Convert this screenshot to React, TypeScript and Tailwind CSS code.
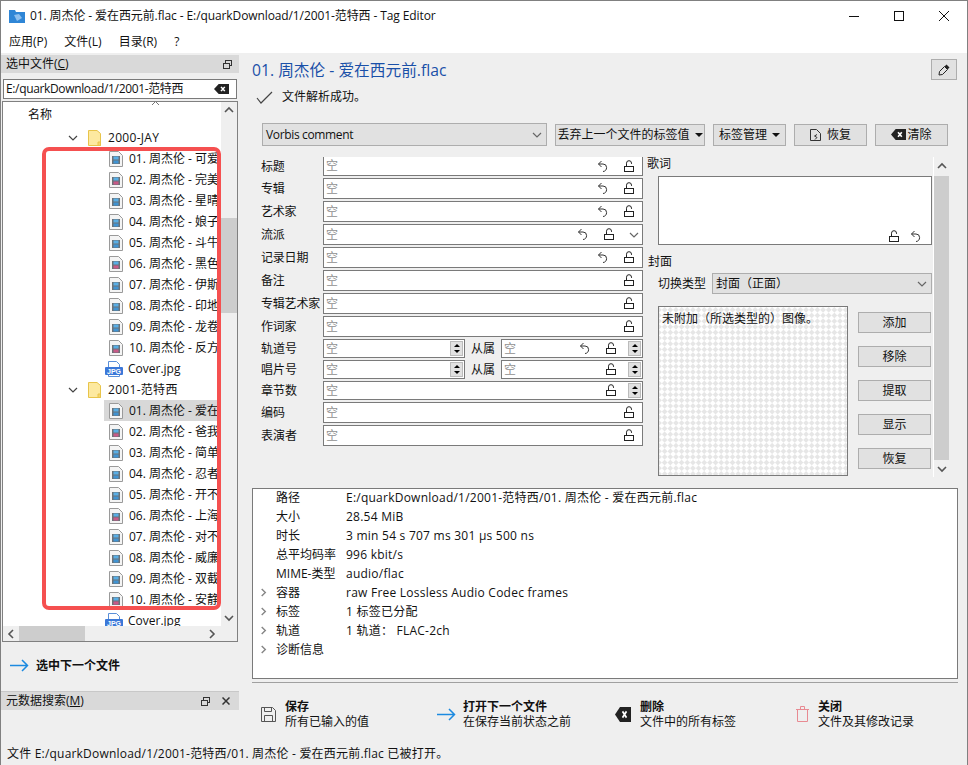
import type { ReactNode } from 'react';

const tagFields = [
  { label: '标题', icons: 'undo', top: true },
  { label: '专辑', icons: 'undo' },
  { label: '艺术家', icons: 'undo' },
  { label: '流派', icons: 'combo' },
  { label: '记录日期', icons: 'undo' },
  { label: '备注', icons: 'lock' },
  { label: '专辑艺术家', icons: 'lock' },
  { label: '作词家', icons: 'lock' },
];

const album2000 = ['可爱女人', '完美主义', '星晴', '娘子', '斗牛', '黑色幽默', '伊斯坦堡', '印地安老斑鸠', '龙卷风', '反方向的钟'];
const album2001 = ['爱在西元前', '爸我回来了', '简单爱', '忍者', '开不了口', '上海一九四三', '对不起', '威廉古堡', '双截棍', '安静'];

const details = [
  { label: '路径', value: 'E:/quarkDownload/1/2001-范特西/01. 周杰伦 - 爱在西元前.flac' },
  { label: '大小', value: '28.54 MiB' },
  { label: '时长', value: '3 min 54 s 707 ms 301 µs 500 ns' },
  { label: '总平均码率', value: '996 kbit/s' },
  { label: 'MIME-类型', value: 'audio/flac' },
  { label: '容器', value: 'raw Free Lossless Audio Codec frames', more: true },
  { label: '标签', value: '1 标签已分配', more: true },
  { label: '轨道', value: '1 轨道： FLAC-2ch', more: true },
  { label: '诊断信息', value: '', more: true },
];

const LockIcon = () => (
  <svg width="12" height="13" viewBox="0 0 12 13" fill="none" stroke="#222" strokeWidth="1" className="shrink-0">
    <path d="M3.5 6.5V3.2a2.5 2.5 0 0 1 5 0V4" />
    <rect x="1.5" y="6.5" width="9" height="5" />
  </svg>
);

const UndoIcon = () => (
  <svg width="12" height="13" viewBox="0 0 12 13" fill="none" stroke="#333" strokeWidth="1" className="shrink-0">
    <path d="M4.5 1 1.5 4l3 3" />
    <path d="M1.5 4H6a3.6 3.6 0 0 1 3.6 3.6c0 2.200-1.600 3.900-3.600 3.900" />
  </svg>
);

const Chevron = ({ color = '#666', size = 10, weight = 1.2 }: { color?: string; size?: number; weight?: number }) => (
  <svg width={size} height={size} viewBox="0 0 10 10" fill="none" stroke={color} strokeWidth={weight}>
    <path d="M1 3l4 4 4-4" />
  </svg>
);

const BackspaceIcon = ({ w = 16, h = 12 }: { w?: number; h?: number }) => (
  <svg width={w} height={h} viewBox="0 0 16 12" preserveAspectRatio="none">
    <path d="M5 0h11v12H5L0 6z" fill="#222" />
    <path d="M7.500 3.500l4 5m0-5l-4 5" stroke="#fff" strokeWidth="1.700" />
  </svg>
);

const FileIcon = ({ red }: { red?: boolean }) => (
  <svg width="14" height="16" viewBox="0 0 14 16" className="shrink-0">
    <path d="M.5.5h9l4 4v11H.5z" fill="#f4f4f4" stroke="#9a9a9a" />
    <rect x="3" y="5" width="8" height="8" fill="#6a7278" />
    <rect x="4.500" y="5.500" width="5" height="3" fill="#58aee6" />
    <rect x="4.500" y="9.500" width="5" height="3" fill={red ? '#c85a88' : '#3f93d3'} />
  </svg>
);

const JpgIcon = () => (
  <svg width="18" height="16" viewBox="0 0 18 16" className="shrink-0">
    <path d="M3.500.5h8l3 3v12h-11z" fill="#fff" stroke="#5a8fd8" />
    <rect x="0" y="6" width="18" height="8" rx="1" fill="#3b78d8" />
    <text x="9" y="12.500" textAnchor="middle" fontSize="7" fontWeight="700" fill="#fff" fontFamily="Liberation Sans">JPG</text>
  </svg>
);

const FolderIcon = () => (
  <svg width="13" height="16" viewBox="0 0 13 16" className="shrink-0">
    <path d="M.5.5h8.500l3.500 3v12H.5z" fill="#fde9a0" stroke="#e8c44a" />
    <path d="M10 12h2.500v3.500H10z" fill="#f6d66e" stroke="#e8c44a" />
  </svg>
);

const ArrowIcon = () => (
  <svg width="19" height="13" viewBox="0 0 19 13" fill="none" stroke="#1c8ae0" strokeWidth="1.500">
    <path d="M0 6.500h17.500M12 1l5.500 5.500L12 12" />
  </svg>
);

const DockFloat = () => (
  <svg width="9" height="9" viewBox="0 0 9 9" fill="none" stroke="#333">
    <rect x="2.500" y=".5" width="6" height="5" />
    <rect x=".5" y="3.500" width="6" height="5" fill="#d9d9d9" />
  </svg>
);

const DockClose = () => (
  <svg width="8" height="8" viewBox="0 0 8 8" stroke="#333" strokeWidth="1.500">
    <path d="M.5.5l7 7m0-7l-7 7" />
  </svg>
);

const Spinner = () => (
  <div className="flex w-[13px] h-[15px] flex-col items-center justify-around bg-[#e1e1e1] border border-[#bbb] shrink-0">
    <span className="w-0 h-0 border-x-[3px] border-x-transparent border-b-[3px] border-b-black" />
    <span className="w-0 h-0 border-x-[3px] border-x-transparent border-t-[3px] border-t-black" />
  </div>
);

const Caret = () => <span className="w-0 h-0 ml-[1px] border-x-[4px] border-x-transparent border-t-[4px] border-t-[#111] shrink-0" />;

const Empty = () => <span className="text-[#909090]">空</span>;

const ToolBtn = ({ w, children }: { w: string; children: ReactNode }) => (
  <div className={`${w} h-[22px] flex items-center justify-center gap-1 bg-[#e1e1e1] border border-[#adadad] shrink-0`}>{children}</div>
);

const FieldBox = ({ h = 'h-[21px]', children }: { h?: string; children?: ReactNode }) => (
  <div className={`${h} flex flex-1 items-center bg-white border border-[#7a7a7a] pl-[2px] pr-[7px]`}>
    <Empty />
    <div className="flex-1" />
    {children}
  </div>
);

const CoverBtn = ({ label }: { label: string }) => (
  <div className="h-[21px] flex items-center justify-center bg-[#e1e1e1] border border-[#adadad]">{label}</div>
);

const TreeRow = ({ name, selected, red }: { name: string; selected?: boolean; red?: boolean }) => (
  <div className={`h-[21px] ml-[101px] pl-[5px] flex items-center gap-[6px] whitespace-nowrap ${selected ? 'bg-[#d8d8d8]' : ''}`}>
    <FileIcon red={red} />
    <span>{name}</span>
  </div>
);

const TreeFolder = ({ name }: { name: string }) => (
  <div className="h-[21px] flex items-center whitespace-nowrap pl-[65px]">
    <Chevron color="#444" />
    <span className="ml-[10px]"><FolderIcon /></span>
    <span className="ml-[7px] tracking-[0.3px]">{name}</span>
  </div>
);

const TreeCover = () => (
  <div className="h-[21px] ml-[102px] flex items-center gap-[5px] whitespace-nowrap">
    <JpgIcon />
    <span>Cover.jpg</span>
  </div>
);

const BottomAction = ({ icon, title, sub, w, iconW }: { icon: ReactNode; title: string; sub: string; w: string; iconW: string }) => (
  <div className={`${w} flex items-center shrink-0`}>
    <div className={`${iconW} flex justify-start`}>{icon}</div>
    <div className="leading-[15px]">
      <div className="font-bold">{title}</div>
      <div>{sub}</div>
    </div>
  </div>
);

export default function App() {
  return (
    <div
      className="relative w-[968px] h-[765px] flex flex-col overflow-hidden bg-[#efefef] border-x border-t border-[#808080] text-[12px] text-[#111]"
      style={{ fontFamily: '"Open Sans", "Noto Sans CJK SC", sans-serif' }}
    >
      {/* title bar */}
      <div className="h-[29px] bg-white flex items-center pl-[8px] shrink-0">
        <svg width="16" height="14" viewBox="0 0 16 14" className="shrink-0">
          <path d="M0 1h6l1 2h9v11H0z" fill="#2f86d6" />
          <path d="M5 6l5-1 3 4-5 3z" fill="#8fc0ee" />
        </svg>
        <span className="ml-[5px] tracking-[-0.1px]">01. 周杰伦 - 爱在西元前.flac - E:/quarkDownload/1/2001-范特西 - Tag Editor</span>
        <div className="flex-1" />
        <div className="flex items-center gap-[35px] pr-[18px]">
          <svg width="10" height="10" viewBox="0 0 10 10" stroke="#111"><path d="M0 5.500h10" /></svg>
          <svg width="10" height="10" viewBox="0 0 10 10" fill="none" stroke="#111"><rect x=".5" y=".5" width="9" height="9" /></svg>
          <svg width="10" height="10" viewBox="0 0 10 10" stroke="#111"><path d="M0 0l10 10m0-10L0 10" /></svg>
        </div>
      </div>
      {/* menu */}
      <div className="h-[23px] bg-white flex items-center gap-[17px] pl-[8px] shrink-0">
        <span>应用(P)</span>
        <span>文件(L)</span>
        <span>目录(R)</span>
        <span>?</span>
      </div>

      <div className="flex flex-1 min-h-0">
        {/* left dock */}
        <aside className="w-[238px] flex flex-col shrink-0">
          <div className="mt-[2px] h-[18px] bg-[#d9d9d9] flex items-center pl-[5px] pr-[7px]">
            <span><span>选中文件(</span><span className="underline">C</span>)</span>
            <div className="flex-1" />
            <DockFloat />
          </div>
          <div className="mt-[6px] ml-[2px] mr-[2px] h-[20px] bg-white border border-[#7a7a7a] flex items-center pl-[2px] pr-[7px]">
            <span className="tracking-[-0.35px]">E:/quarkDownload/1/2001-范特西</span>
            <div className="flex-1" />
            <BackspaceIcon w={15} h={10} />
          </div>
          <div className="mt-[2px] ml-[1px] mr-[1px] h-[541px] border border-[#808080] flex flex-col bg-[#efefef]">
            <div className="flex flex-1 min-h-0">
              <div className="relative w-[218px] bg-white overflow-hidden">
                <div className="absolute left-[148px] top-[-2px] text-[#888]">
                  <svg width="9" height="6" viewBox="0 0 9 6" fill="none" stroke="#777"><path d="M1 5l3.500-3.500L8 5" /></svg>
                </div>
                <div className="h-[25px] flex items-end pl-[25px] pb-[3px]">名称</div>
                <TreeFolder name="2000-JAY" />
                {album2000.map((n, i) => <TreeRow key={n} name={`${String(i + 1).padStart(2, '0')}. 周杰伦 - ${n}`} red={i % 4 === 1} />)}
                <TreeCover />
                <TreeFolder name="2001-范特西" />
                {album2001.map((n, i) => <TreeRow key={n} name={`${String(i + 1).padStart(2, '0')}. 周杰伦 - ${n}`} selected={i === 0} red={i % 4 === 1} />)}
                <TreeCover />
              </div>
              <div className="flex-1 flex flex-col items-center">
                <div className="h-[16px] flex items-center rotate-180"><Chevron color="#555" weight={1.6} /></div>
                <div className="w-full mt-[100px] h-[95px] bg-[#cdcdcd]" />
                <div className="flex-1" />
                <div className="h-[16px] flex items-center"><Chevron color="#555" weight={1.6} /></div>
              </div>
            </div>
            <div className="h-[15px] flex items-center shrink-0">
              <div className="w-[16px] flex justify-center rotate-90"><Chevron color="#555" weight={1.6} /></div>
              <div className="w-[66px] h-full bg-[#cdcdcd]" />
              <div className="flex-1" />
              <div className="w-[16px] flex justify-center -rotate-90 mr-[17px]"><Chevron color="#555" weight={1.6} /></div>
            </div>
          </div>
          <div className="h-[49px] flex items-center pl-[9px] pb-[2px] gap-[7px] font-bold shrink-0">
            <ArrowIcon />
            <span>选中下一个文件</span>
          </div>
          <div className="h-[19px] bg-[#d9d9d9] border-t border-[#c8c8c8] flex items-center pl-[5px] pr-[9px] gap-[12px] shrink-0">
            <span className="flex-1"><span>元数据搜索(</span><span className="underline">M</span>)</span>
            <DockFloat />
            <DockClose />
          </div>
        </aside>

        {/* main */}
        <main className="flex-1 min-w-0 pl-[13px] pr-[9px] flex flex-col">
          <div className="mt-[6px] flex items-center justify-between">
            <span className="text-[15.7px] text-[#1a50a8] leading-[20px] mt-[1px]">01. 周杰伦 - 爱在西元前.flac</span>
            <div className="w-[26px] h-[21px] bg-[#e1e1e1] border border-[#adadad] flex items-center justify-center mr-[1px]">
              <svg width="13" height="13" viewBox="0 0 13 13">
                <path d="M8.500 1.500l3 3-2 2-3-3z" fill="#222" />
                <path d="M6.500 3.500l3 3-5 5-3.500.5.500-3.500z" fill="none" stroke="#222" />
              </svg>
            </div>
          </div>
          <div className="mt-[7px] h-[20px] flex items-center pl-[4px]">
            <svg width="17" height="13" viewBox="0 0 17 13" fill="none" stroke="#444" strokeWidth="1.200"><path d="M1 7l4 5L16 1" /></svg>
            <span className="ml-[9px]">文件解析成功。</span>
          </div>

          <div className="mt-[16px] ml-[10px] flex gap-[8px] items-center">
            <div className="w-[285px] h-[23px] bg-[#e1e1e1] border border-[#adadad] flex items-center justify-between pl-[3px] pr-[4px] shrink-0">
              <span className="tracking-[-0.35px]">Vorbis comment</span>
              <Chevron />
            </div>
            <ToolBtn w="w-[150px]">丢弃上一个文件的标签值<Caret /></ToolBtn>
            <ToolBtn w="w-[73px]">标签管理<Caret /></ToolBtn>
            <ToolBtn w="w-[73px]">
              <svg width="11" height="12" viewBox="0 0 11 12" fill="none" stroke="#333"><path d="M.5.5h6l4 4v7H.5z" /><path d="M7 5.500 4.500 7 7 8.500 5 10.500" /></svg>
              <span className="ml-[2px]">恢复</span>
            </ToolBtn>
            <ToolBtn w="w-[73px]"><BackspaceIcon w={15} h={11} /><span className="-ml-[3px]">清除</span></ToolBtn>
          </div>

          <div className="mt-[11px] ml-[9px] h-[320px] flex">
            {/* tag form */}
            <div className="w-[382px] flex flex-col gap-[2px] shrink-0">
              {tagFields.map(f => (
                <div key={f.label} className="flex items-center">
                  <span className="w-[62px] whitespace-nowrap shrink-0 -tracking-[0.2px]">{f.label}</span>
                  <FieldBox h={f.top ? 'h-[19px] border-t-0' : 'h-[21px]'}>
                    {f.icons === 'undo' && <><UndoIcon /><span className="w-[14px]" /><LockIcon /></>}
                    {f.icons === 'lock' && <LockIcon />}
                    {f.icons === 'combo' && <><UndoIcon /><span className="w-[14px]" /><LockIcon /><span className="ml-[14px] -mr-[4px]"><Chevron /></span></>}
                  </FieldBox>
                </div>
              ))}
              <div className="flex items-center">
                <span className="w-[62px] shrink-0">轨道号</span>
                <div className="w-[142px] h-[19px] flex items-center justify-between bg-white border border-[#7a7a7a] pl-[2px] pr-[1px]"><Empty /><Spinner /></div>
                <span className="w-[36px] pl-[6px]">从属</span>
                <div className="flex-1 h-[19px] flex items-center bg-white border border-[#7a7a7a] pl-[2px] pr-[1px]">
                  <Empty />
                  <div className="flex-1" />
                  <UndoIcon />
                  <span className="w-[14px]" />
                  <LockIcon />
                  <span className="w-[11px]" />
                  <Spinner />
                </div>
              </div>
              <div className="flex items-center">
                <span className="w-[62px] shrink-0">唱片号</span>
                <div className="w-[142px] h-[19px] flex items-center justify-between bg-white border border-[#7a7a7a] pl-[2px] pr-[1px]"><Empty /><Spinner /></div>
                <span className="w-[36px] pl-[6px]">从属</span>
                <div className="flex-1 h-[19px] flex items-center bg-white border border-[#7a7a7a] pl-[2px] pr-[1px]">
                  <Empty />
                  <div className="flex-1" />
                  <LockIcon />
                  <span className="w-[11px]" />
                  <Spinner />
                </div>
              </div>
              <div className="flex items-center">
                <span className="w-[62px] shrink-0">章节数</span>
                <div className="flex-1 h-[19px] flex items-center bg-white border border-[#7a7a7a] pl-[2px] pr-[1px]">
                  <Empty />
                  <div className="flex-1" />
                  <LockIcon />
                  <span className="w-[11px]" />
                  <Spinner />
                </div>
              </div>
              <div className="flex items-center">
                <span className="w-[62px] shrink-0">编码</span>
                <FieldBox><LockIcon /></FieldBox>
              </div>
              <div className="flex items-center">
                <span className="w-[62px] shrink-0">表演者</span>
                <FieldBox><LockIcon /></FieldBox>
              </div>
            </div>

            {/* lyrics and cover */}
            <div className="w-[285px] ml-[4px] shrink-0">
              <div className="h-[19px] leading-[13px]">歌词</div>
              <div className="ml-[11px] h-[69px] bg-white border border-[#7a7a7a] flex items-end justify-end gap-[10px] pr-[9px] pb-[1px]">
                <LockIcon />
                <UndoIcon />
              </div>
              <div className="mt-[6px] ml-[1px] h-[22px] flex items-center">封面</div>
              <div className="ml-[11px] flex items-center">
                <span className="w-[54px] shrink-0">切换类型</span>
                <div className="flex-1 h-[21px] bg-[#e1e1e1] border border-[#adadad] flex items-center justify-between pl-[3px] pr-[4px]">
                  <span>封面（正面）</span>
                  <Chevron />
                </div>
              </div>
              <div className="ml-[11px] mt-[12px] flex">
                <div className="relative w-[190px] h-[170px] bg-white border border-[#7a7a7a] overflow-hidden shrink-0 px-[3px] py-[3px]">
                  <svg className="absolute inset-0" width="190" height="170">
                    <defs>
                      <pattern id="chk" width="8" height="8" patternUnits="userSpaceOnUse" patternTransform="rotate(45)">
                        <rect width="4" height="4" fill="#e6e6e6" />
                        <rect x="4" y="4" width="4" height="4" fill="#e6e6e6" />
                      </pattern>
                    </defs>
                    <rect width="190" height="170" fill="url(#chk)" />
                  </svg>
                  <span className="relative">未附加（所选类型的）图像。</span>
                </div>
                <div className="ml-[10px] w-[73px] pt-[6px] flex flex-col gap-[13px] shrink-0">
                  <CoverBtn label="添加" />
                  <CoverBtn label="移除" />
                  <CoverBtn label="提取" />
                  <CoverBtn label="显示" />
                  <CoverBtn label="恢复" />
                </div>
              </div>
            </div>

            {/* scrollbar of the tag area */}
            <div className="w-[16px] ml-[1px] bg-[#efefef] border-l border-white flex flex-col items-center shrink-0">
              <div className="h-[19px] flex items-center rotate-180"><Chevron color="#555" weight={1.6} /></div>
              <div className="w-full h-[284px] bg-[#cdcdcd]" />
              <div className="flex-1 flex items-center"><Chevron color="#555" weight={1.6} /></div>
            </div>
          </div>

          {/* details */}
          <div className="mt-[11px] h-[191px] bg-white border border-[#7a7a7a] flex flex-col shrink-0">
            <div className="-mt-[1px]">
              {details.map(d => (
                <div key={d.label} className="h-[19px] flex items-center whitespace-nowrap">
                  <span className="w-[23px] pl-[6px] shrink-0">
                    {d.more && <span className="block -rotate-90 w-[9px]"><Chevron color="#888" size={9} weight={1.6} /></span>}
                  </span>
                  <span className="w-[70px] shrink-0">{d.label}</span>
                  <span className="tracking-[0.24px]">{d.value}</span>
                </div>
              ))}
            </div>
          </div>

          <div className="mt-[3px] h-[1px] bg-[#a0a0a0] shrink-0" />

          <div className="mt-[16px] pl-[9px] flex shrink-0">
            <BottomAction
              w="w-[176px]"
              iconW="w-[24px]"
              title="保存"
              sub="所有已输入的值"
              icon={
                <svg width="15" height="15" viewBox="0 0 15 15" fill="none" stroke="#555">
                  <path d="M.5.5h11l3 3v11H.5z" />
                  <path d="M3.500.5v4h7v-4M3.500 14.500v-6h8v6" />
                </svg>
              }
            />
            <BottomAction w="w-[178px]" iconW="w-[26px]" title="打开下一个文件" sub="在保存当前状态之前" icon={<ArrowIcon />} />
            <BottomAction w="w-[181px]" iconW="w-[25px]" title="删除" sub="文件中的所有标签" icon={<BackspaceIcon w={16} h={15} />} />
            <BottomAction
              w="w-[150px]"
              iconW="w-[22px]"
              title="关闭"
              sub="文件及其修改记录"
              icon={
                <svg width="13" height="16" viewBox="0 0 13 16" fill="none" stroke="#e88a92">
                  <path d="M0 3.500h13M4.500 3.500v-3h4v3M1.500 3.500v12h10v-12" />
                </svg>
              }
            />
          </div>
        </main>
      </div>

      {/* status bar */}
      <div className="h-[23px] flex items-center pl-[6px] shrink-0 tracking-[0.2px]">文件 E:/quarkDownload/1/2001-范特西/01. 周杰伦 - 爱在西元前.flac 已被打开。</div>

      {/* red annotation drawn over the file tree */}
      <div className="absolute left-[41px] top-[146px] w-[179px] h-[463px] border-[4px] border-[#f55050] rounded-[7px] pointer-events-none" />
    </div>
  );
}
